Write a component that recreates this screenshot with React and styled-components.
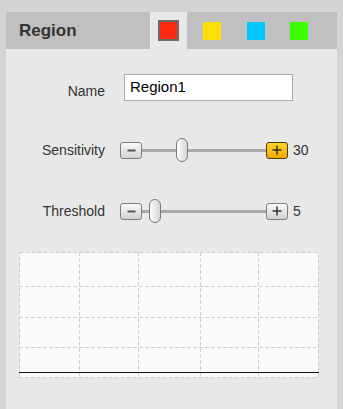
import React, { useState } from 'react'
import styled, { createGlobalStyle } from 'styled-components'

const GlobalStyle = createGlobalStyle`
  html, body {
    margin: 0;
    padding: 0;
    background: #d4d4d4;
    font-family: "Liberation Sans", Arial, sans-serif;
  }
`

const tabs = [
  { id: 1, color: '#ff2a0e' },
  { id: 2, color: '#ffdf0a' },
  { id: 3, color: '#00c6ff' },
  { id: 4, color: '#3cff00' },
]

const MinusIcon = () => (
  <svg width='9' height='9' viewBox='0 0 9 9'>
    <rect x='0.5' y='3.5' width='8' height='2' fill='#555' />
  </svg>
)

const PlusIcon = () => (
  <svg width='10' height='10' viewBox='0 0 10 10'>
    <rect x='0.5' y='4.25' width='9' height='1.5' fill='#333' />
    <rect x='4.25' y='0.5' width='1.5' height='9' fill='#333' />
  </svg>
)

const Slider = ({ value, hot }) => (
  <SliderWrap>
    <StepButton><MinusIcon /></StepButton>
    <Track>
      <Thumb style={{ left: 1 + value * 1.11 }} />
    </Track>
    <StepButton hot={hot ? 1 : 0}><PlusIcon /></StepButton>
    <Value>{value}</Value>
  </SliderWrap>
)

const Chart = () => {
  const cols = [60, 119, 181, 239]
  const rows = [34, 65, 95]
  return (
    <ChartBox>
      <svg width='300' height='126' viewBox='0 0 300 126'>
        <rect x='0.5' y='0.5' width='299' height='125' fill='#fafafa' stroke='#cfcfcf' strokeDasharray='4 2' />
        {cols.map(x => (
          <line key={'c' + x} x1={x + 0.5} y1='0' x2={x + 0.5} y2='126' stroke='#d0d0d0' strokeDasharray='4 2' />
        ))}
        {rows.map(y => (
          <line key={'r' + y} x1='0' y1={y + 0.5} x2='300' y2={y + 0.5} stroke='#d0d0d0' strokeDasharray='4 2' />
        ))}
        <line x1='0' y1='120.5' x2='300' y2='120.5' stroke='#111' strokeWidth='1.2' />
      </svg>
    </ChartBox>
  )
}

export default function App () {
  const [active, setActive] = useState(1)
  const [name, setName] = useState('Region1')

  return (
    <Page>
      <GlobalStyle />
      <Panel>
        <Header>
          <Title>Region</Title>
          <Tabs>
            {tabs.map(t => (
              <Tab key={t.id} active={active === t.id ? 1 : 0} onClick={() => setActive(t.id)}>
                <Swatch color={t.color} active={active === t.id ? 1 : 0} />
              </Tab>
            ))}
          </Tabs>
        </Header>

        <Body>
          <Row>
            <Label drop={6}>Name</Label>
            <NameInput value={name} onChange={e => setName(e.target.value)} />
          </Row>
          <Row>
            <Label>Sensitivity</Label>
            <Slider value={30} hot />
          </Row>
          <Row>
            <Label>Threshold</Label>
            <Slider value={5} />
          </Row>
          <Chart />
        </Body>
      </Panel>
    </Page>
  )
}

const Page = styled.div`
  padding: 12px 6px 0;
  min-height: 397px;
`

const Panel = styled.div`
  background: #e8e8e8;
  min-height: 397px;
  display: flex;
  flex-direction: column;
`

const Header = styled.div`
  display: flex;
  align-items: stretch;
  height: 37px;
  background: #c0c0c0;
`

const Title = styled.div`
  flex: none;
  width: 131px;
  padding-left: 13px;
  display: flex;
  align-items: center;
  font-size: 17px;
  font-weight: bold;
  color: #333;
`

const Tabs = styled.div`
  display: flex;
  gap: 6.5px;
`

const Tab = styled.div`
  width: 37px;
  display: flex;
  align-items: center;
  justify-content: center;
  cursor: pointer;
  background: ${props => props.active ? '#e8e8e8' : 'transparent'};
`

const Swatch = styled.span`
  display: block;
  box-sizing: border-box;
  width: ${props => props.active ? '21px' : '18px'};
  height: ${props => props.active ? '21px' : '18px'};
  background: ${props => props.color};
  border: ${props => props.active ? '2px solid #6b6b6b' : '0'};
`

const Body = styled.div`
  display: flex;
  flex-direction: column;
  gap: 37px;
  padding: 25px 0 0;
`

const Row = styled.div`
  display: flex;
  align-items: center;
  gap: 15px;
`

const Label = styled.div`
  flex: none;
  width: 99px;
  padding-top: ${props => props.drop || 0}px;
  text-align: right;
  font-size: 14px;
  color: #333;
`

const NameInput = styled.input`
  box-sizing: border-box;
  width: 169px;
  height: 27px;
  margin: 0 0 0 4px;
  padding: 0 5px 2px;
  border: 1px solid #a9a9a9;
  border-radius: 0;
  background: #fff;
  font-family: "Liberation Sans", Arial, sans-serif;
  font-size: 15px;
  color: #000;
  outline: none;
`

const SliderWrap = styled.div`
  display: flex;
  align-items: center;
  height: 24px;
`

const StepButton = styled.button`
  box-sizing: border-box;
  width: 22px;
  height: 17px;
  padding: 0;
  display: flex;
  align-items: center;
  justify-content: center;
  border-radius: 3px;
  cursor: pointer;
  border: 1px solid ${props => props.hot ? '#4a3a10' : '#7d7d7d'};
  background: ${props => props.hot
    ? 'linear-gradient(#ffd42a, #f2aa00)'
    : 'linear-gradient(#fbfbfb, #d2d2d2)'};
`

const Track = styled.div`
  position: relative;
  width: 124px;
  height: 3px;
  background: #a9a9a9;
`

const Thumb = styled.div`
  position: absolute;
  top: -11px;
  box-sizing: border-box;
  width: 12px;
  height: 24px;
  border: 1px solid #7a7a7a;
  border-radius: 6px;
  background: linear-gradient(90deg, #fdfdfd, #d6d6d6);
`

const Value = styled.span`
  margin-left: 5px;
  font-size: 14px;
  color: #333;
`

const ChartBox = styled.div`
  margin: -8px 0 0 13px;
  width: 300px;
  height: 126px;
  line-height: 0;
`
